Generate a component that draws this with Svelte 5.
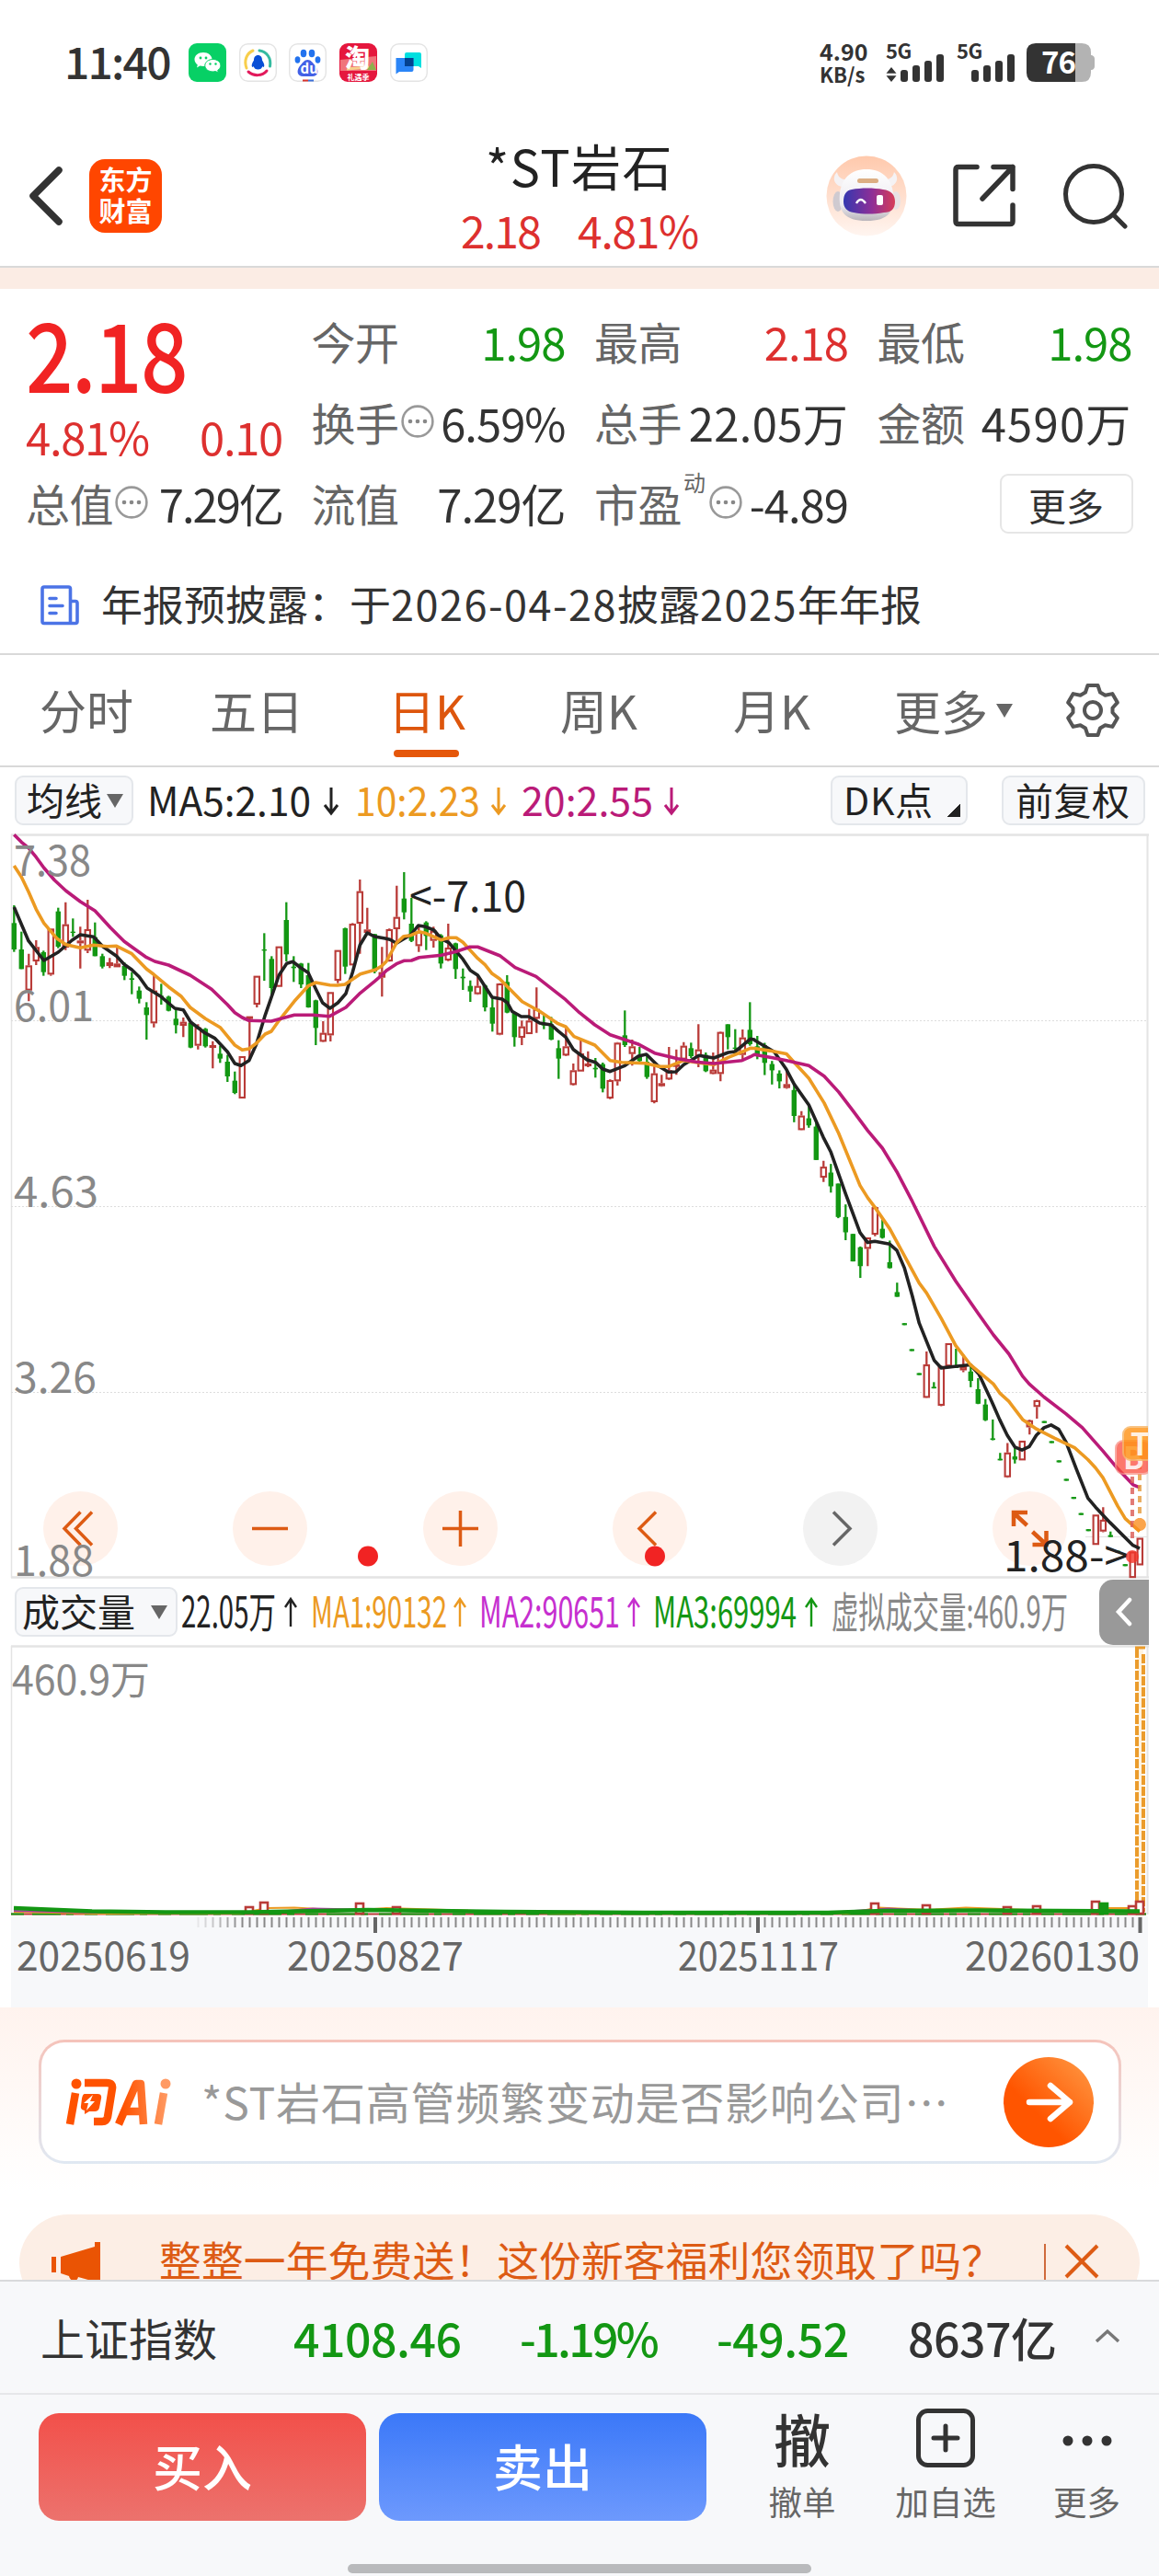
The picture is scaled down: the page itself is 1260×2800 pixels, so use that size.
<script>
  // Daily bars, grouped in blocks. Each bar is [direction, high, bodyTop, bodyBottom, low].
  const STEP = 8;
  const FIRST_X = 15.3;
  const blocks = [
    {
      base: 830,
      unit: 3,
      bars: [
        ['g', 462, 520, 606, 614], ['g', 548, 606, 670, 670], ['r', 620, 658, 740, 775], ['r', 576, 598, 645, 657],
        ['g', 610, 615, 680, 692], ['r', 538, 538, 688, 692], ['g', 470, 482, 597, 602], ['r', 452, 524, 600, 608],
        ['g', 505, 548, 552, 565], ['r', 532, 577, 586, 668], ['r', 444, 540, 610, 618], ['g', 518, 566, 628, 628],
        ['g', 620, 628, 662, 668], ['r', 634, 648, 660, 667], ['r', 596, 652, 664, 664], ['g', 648, 660, 692, 706],
        ['g', 680, 700, 705, 752], ['g', 727, 740, 767, 782], ['g', 778, 795, 820, 900], ['r', 690, 740, 847, 860],
        ['g', 718, 757, 761, 786], ['g', 757, 760, 806, 808], ['g', 800, 832, 853, 880], ['r', 828, 842, 855, 892],
        ['g', 843, 845, 926, 928], ['r', 850, 860, 920, 932], ['g', 862, 865, 922, 926], ['r', 905, 918, 926, 994],
        ['g', 920, 946, 962, 976], ['g', 950, 972, 1020, 1038], ['g', 1004, 1034, 1074, 1078], ['r', 954, 954, 1092, 1092],
        ['r', 824, 824, 829, 960], ['r', 692, 692, 786, 795], ['g', 553, 606, 610, 708], ['g', 628, 637, 732, 755],
        ['r', 596, 596, 728, 728], ['g', 452, 510, 622, 645], ['g', 628, 662, 667, 712], ['g', 650, 652, 720, 732],
        ['g', 650, 690, 795, 796], ['g', 770, 772, 862, 918], ['r', 840, 878, 907, 908], ['r', 745, 745, 886, 906],
        ['r', 608, 608, 708, 716], ['g', 535, 537, 662, 686], ['r', 520, 522, 658, 658], ['r', 378, 416, 522, 620],
        ['r', 470, 541, 552, 555], ['g', 555, 556, 678, 684], ['r', 598, 680, 698, 760]
      ]
    },
    {
      base: 900,
      unit: 3,
      bars: [
        ['r', 328, 330, 435, 436], ['r', 188, 290, 330, 375], ['g', 144, 230, 275, 298], ['g', 228, 312, 368, 372],
        ['r', 320, 338, 385, 404], ['g', 304, 308, 352, 398], ['r', 322, 335, 368, 390], ['g', 346, 350, 442, 458],
        ['r', 312, 390, 432, 434], ['g', 374, 376, 460, 492], ['g', 458, 485, 490, 528], ['g', 497, 515, 533, 567],
        ['r', 480, 515, 542, 544], ['g', 510, 514, 585, 598], ['g', 555, 585, 638, 664], ['r', 506, 507, 674, 676],
        ['g', 480, 502, 602, 604], ['g', 600, 603, 682, 713], ['r', 628, 647, 684, 708], ['r', 590, 628, 672, 672],
        ['r', 520, 590, 622, 668], ['g', 605, 638, 644, 656], ['g', 616, 640, 690, 692], ['g', 692, 718, 752, 818],
        ['r', 648, 712, 742, 744], ['r', 768, 790, 838, 840], ['r', 690, 735, 794, 794], ['r', 728, 768, 776, 780],
        ['g', 750, 782, 787, 814], ['g', 765, 770, 850, 862], ['r', 820, 822, 882, 884], ['r', 698, 700, 826, 840],
        ['g', 595, 676, 708, 714], ['r', 690, 712, 737, 775], ['g', 714, 745, 760, 762], ['g', 738, 762, 812, 818],
        ['r', 770, 800, 894, 898], ['r', 805, 832, 842, 844], ['r', 714, 790, 820, 822], ['r', 722, 770, 776, 805],
        ['r', 698, 710, 755, 760], ['g', 700, 718, 744, 750], ['r', 640, 722, 745, 780], ['g', 732, 740, 793, 796],
        ['r', 732, 788, 802, 803], ['r', 664, 665, 802, 826], ['g', 640, 640, 682, 722], ['g', 656, 716, 720, 735],
        ['r', 657, 683, 740, 760], ['g', 568, 658, 705, 710], ['g', 678, 712, 740, 754]
      ]
    },
    {
      base: 1060,
      unit: 2.34,
      bars: [
        ['g', 172, 178, 223, 254], ['g', 218, 226, 242, 278], ['g', 242, 250, 270, 288], ['r', 240, 277, 287, 289],
        ['g', 280, 292, 358, 374], ['r', 346, 357, 394, 395], ['g', 335, 364, 382, 388], ['g', 370, 385, 470, 470],
        ['r', 472, 487, 515, 526], ['g', 480, 502, 537, 553], ['g', 530, 530, 615, 618], ['g', 583, 615, 654, 674],
        ['g', 658, 658, 728, 728], ['g', 690, 692, 740, 770], ['r', 667, 667, 696, 740], ['r', 590, 590, 660, 664],
        ['g', 620, 645, 668, 670], ['g', 675, 730, 745, 746], ['g', 782, 806, 818, 818], ['g', 885, 885, 890, 890],
        ['g', 951, 951, 956, 956], ['g', 1012, 1012, 1017, 1017], ['r', 957, 990, 1075, 1076], ['g', 1035, 1047, 1051, 1051],
        ['r', 993, 995, 1095, 1096], ['r', 936, 936, 995, 995], ['g', 950, 995, 999, 999], ['r', 965, 995, 1005, 1010],
        ['g', 995, 1008, 1032, 1048], ['g', 1025, 1053, 1090, 1091], ['g', 1078, 1092, 1132, 1134], ['g', 1130, 1178, 1182, 1183],
        ['g', 1215, 1230, 1234, 1234], ['r', 1190, 1214, 1277, 1278], ['g', 1200, 1224, 1232, 1242], ['r', 1184, 1184, 1234, 1234],
        ['r', 1130, 1132, 1150, 1168], ['r', 1080, 1081, 1098, 1128], ['g', 1134, 1134, 1139, 1139], ['g', 1185, 1185, 1190, 1190],
        ['g', 1234, 1234, 1239, 1239], ['g', 1281, 1281, 1286, 1286], ['g', 1327, 1327, 1332, 1332], ['g', 1368, 1368, 1373, 1373],
        ['g', 1409, 1409, 1414, 1414], ['r', 1372, 1372, 1449, 1449], ['r', 1353, 1385, 1415, 1417], ['g', 1415, 1424, 1429, 1429],
        ['g', 1464, 1464, 1469, 1469], ['g', 1498, 1498, 1503, 1503], ['r', 1466, 1466, 1533, 1533], ['r', 1431, 1431, 1501, 1501]
      ]
    }
  ];

  const candles = blocks
    .flatMap((b) => b.bars.map(([dir, ...ys]) => [dir, ...ys.map((y) => b.base + y / b.unit)]))
    .map(([dir, high, top, bottom, low], i) => ({ dir, high, top, bottom, low, x: FIRST_X + i * STEP }));

  // Moving averages, as runs of points; every run has its own origin and unit.
  const origins = [
    [0, 830, 3],
    [420, 900, 3],
    [820, 1060, 2.34]
  ];
  const toPath = (runs) => {
    const pts = runs.flatMap((run, k) => {
      const [ox, oy, u] = origins[k];
      return run.split(' ').map((p) => {
        const [x, y] = p.split(',').map(Number);
        return [ox + x / 3, oy + y / u];
      });
    });
    return 'M' + pts.map(([x, y]) => `${x.toFixed(1)} ${y.toFixed(1)}`).join('L');
  };

  const averages = [
    {
      name: 'ma5',
      d: toPath([
        '46,468 93,578 143,642 190,615 235,576 262,558 305,565 335,596 380,628 405,655 430,672 454,695 480,732 525,760 570,798 598,803 622,843 668,878 700,895 742,940 766,978 786,985 812,968 836,915 865,820 910,690 935,652 955,646 980,665 1005,682 1030,735 1052,780 1076,798 1102,780 1128,750 1150,680 1174,592 1198,552 1222,564 1256,570',
        '12,364 33,376 80,348 104,318 128,322 155,333 180,362 204,374 250,428 274,464 298,480 345,552 378,558 395,570 410,598 440,615 465,615 500,636 538,642 560,662 585,682 610,722 655,756 682,764 706,786 730,794 778,775 822,744 848,738 885,775 920,796 945,795 970,772 1020,742 1068,750 1115,732 1138,729 1187,688 1200,690',
        '0,165 65,195 105,240 130,277 178,330 225,412 250,450 298,556 345,655 370,680 393,677 442,684 465,700 490,745 515,815 538,885 587,980 610,999 655,995 705,991 733,1015 775,1085 800,1130 825,1170 850,1200 873,1208 897,1199 920,1170 945,1151 968,1144 993,1155 1017,1188 1050,1255 1088,1330 1113,1353 1160,1392 1235,1450 1257,1458'
      ])
    },
    {
      name: 'ma10',
      d: toPath([
        '46,333 70,370 93,418 118,475 143,520 185,570 215,590 262,601 305,592 350,596 380,595 430,620 478,670 502,688 550,728 590,758 620,795 670,832 718,860 766,918 790,934 812,930 836,912 865,882 885,873 910,838 960,775 1005,725 1030,714 1076,722 1100,723 1125,720 1175,686 1225,672 1245,660',
        '0,435 33,375 57,353 80,350 107,338 128,343 178,365 204,358 228,358 250,373 298,425 322,446 345,475 370,492 443,566 500,598 560,638 585,648 612,680 680,708 730,758 768,764 845,767 890,778 920,778 970,758 1020,766 1068,772 1115,748 1160,730 1187,718',
        '0,186 50,192 105,200 128,220 178,262 228,325 275,402 345,535 370,566 393,590 442,645 538,783 562,808 610,873 657,942 705,991 780,1040 802,1064 830,1084 875,1130 920,1154 980,1178 1045,1202 1088,1232 1113,1253 1137,1278 1185,1350 1210,1382 1257,1415'
      ])
    },
    {
      name: 'ma20',
      d: toPath([
        '46,232 70,256 93,275 118,305 143,340 178,380 215,415 262,450 310,480 360,535 405,580 430,598 478,632 505,645 550,657 620,690 690,736 742,786 766,812 790,828 812,838 885,840 960,820 1020,820 1075,824 1128,795 1175,748 1222,710 1245,690',
        '0,465 33,443 57,433 82,432 107,422 180,415 228,403 272,388 298,388 370,416 420,455 488,484 585,560 630,602 680,642 730,674 820,704 875,734 950,752 1010,763 1068,768 1160,758 1187,746',
        '0,202 60,210 105,217 178,230 228,257 275,297 322,345 370,395 418,440 465,500 515,575 587,690 657,778 730,860 780,915 830,963 875,1020 897,1040 945,1073 1017,1116 1070,1151 1137,1210 1185,1255 1235,1296 1257,1303'
      ])
    }
  ];

  const axis = [
    ['7.38', 952, 84],
    ['6.01', 1110, 87],
    ['4.63', 1312, 92],
    ['3.26', 1514, 90],
    ['1.88', 1713, 87]
  ];

  // Volume bars that rise above the baseline: [x, top, direction]
  const peaks = [
    [271, 2073, 'r'], [287, 2068, 'r'], [391, 2069, 'r'], [431, 2073, 'r'], [951, 2069, 'r'], [1007, 2071, 'r'],
    [1095, 2073, 'r'], [1127, 2072, 'r'], [1191, 2067, 'r'], [1200, 2069, 'g'], [1231, 2072, 'r'], [1239, 2067, 'r']
  ];
  const ticks = Array.from({ length: 129 }, (_, i) => 215.5 + i * 8);
  const dates = [
    ['20250619', 18, 189],
    ['20250827', 312, 192],
    ['20251117', 737, 175],
    ['20260130', 1049, 190]
  ];
</script>

{#snippet more()}
  <svg class="dots" viewBox="0 0 36 36">
    <circle cx="18" cy="18" r="16.4" fill="none" stroke="#999" stroke-width="2.6" />
    <g fill="#888"><circle cx="10" cy="18" r="2.3" /><circle cx="18" cy="18" r="2.3" /><circle cx="26" cy="18" r="2.3" /></g>
  </svg>
{/snippet}

{#snippet signal()}
  <svg class="bars" viewBox="0 0 48 30" fill="#333">
    <rect x="0" y="17" width="8" height="13" rx="3" /><rect x="13" y="12" width="8" height="18" rx="3" />
    <rect x="26" y="7" width="8" height="23" rx="3" /><rect x="39" y="0" width="8" height="30" rx="3" />
  </svg>
{/snippet}

<div class="screen">
  <div class="status">
    <span class="clock">11:40</span>
    <div class="apps">
      <svg viewBox="0 0 41 42">
        <rect width="41" height="42" rx="9" fill="#07d065" />
        <g fill="#fff">
          <path d="M16 10c-5.600 0-9.500 3.400-9.500 7.600 0 2.500 1.300 4.400 3.300 5.800l-.8 3 3.400-1.800c1.100.3 2.300.5 3.600.5 5.600 0 9.500-3.400 9.500-7.500S21.600 10 16 10z" />
          <path d="M26.500 17.500c-5 0-8.700 3-8.700 6.700s3.700 6.700 8.700 6.700c1 0 2-.1 2.900-.4l3 1.600-.7-2.700c2-1.200 3.200-3 3.200-5.200 0-3.700-3.500-6.700-8.400-6.700z" stroke="#07d065" />
        </g>
        <g fill="#07d065"><circle cx="13" cy="16" r="1.400" /><circle cx="19" cy="16" r="1.400" /><circle cx="23.500" cy="22.500" r="1.200" /><circle cx="29.500" cy="22.500" r="1.200" /></g>
      </svg>
      <svg viewBox="0 0 41 42">
        <rect x=".7" y=".7" width="39.600" height="40.600" rx="9" fill="#fff" stroke="#e4e4e4" stroke-width="1.400" />
        <g fill="none" stroke-width="3" stroke-linecap="round">
          <path d="M8 27c-3-8 0-16 7-19" stroke="#f8ce4b" /><path d="M22 8c8 1 13 8 11.500 17" stroke="#35bba0" /><path d="M10 31c6 5 15 5 20-1" stroke="#e2195b" />
        </g>
        <path d="M20.500 13c-3 0-4.500 2.300-4.500 5.500-2 3-3 6-1.800 7.500l1.500-.8c.6 2 2.300 3.300 4.800 3.300s4.200-1.300 4.800-3.300l1.500.8c1.200-1.500.2-4.500-1.800-7.500 0-3.200-1.500-5.500-4.500-5.500z" fill="#0a4fd6" />
      </svg>
      <svg viewBox="0 0 41 42">
        <rect x=".7" y=".7" width="39.600" height="40.600" rx="9" fill="#fff" stroke="#e4e4e4" stroke-width="1.400" />
        <g fill="#2272ee"><ellipse cx="16" cy="11" rx="3.300" ry="4.200" /><ellipse cx="25" cy="11" rx="3.300" ry="4.200" /><ellipse cx="9.500" cy="18" rx="2.900" ry="3.700" /><ellipse cx="31.500" cy="18" rx="2.900" ry="3.700" /></g>
        <path d="M20.500 18c-3.500 0-5.200 3-8 6-4.500 5-4 12 3 12h10c7 0 7.500-7 3-12-2.800-3-4.500-6-8-6z" fill="#4360e6" />
        <text x="12.500" y="33" class="du">du</text>
        <rect x="15" y="39.500" width="6" height="2" fill="#d8332c" /><rect x="21" y="39.500" width="6" height="2" fill="#3a6fd8" />
      </svg>
      <svg viewBox="0 0 41 42">
        <rect width="41" height="42" rx="9" fill="#e5173d" />
        <path d="M1 18l39-4v17H1z" fill="#f0747b" /><path d="M8 28l24-2" stroke="#f6d08b" stroke-width="3" /><path d="M30 29l6-9 4 9z" fill="#8fb04c" />
        <rect y="30" width="41" height="4" fill="#e5173d" />
        <text x="6" y="26" class="tao">淘</text><text x="8.500" y="39.500" class="gift">礼遇季</text>
      </svg>
      <svg viewBox="0 0 41 42">
        <rect x=".7" y=".7" width="39.600" height="40.600" rx="9" fill="#fff" stroke="#e4e4e4" stroke-width="1.400" />
        <path d="M18 10h14q2 0 2 2v15l-3-2H16V12q0-2 2-2z" fill="#00dfe0" /><path d="M6.500 16h19v13q0 2-2 2H10l-3.500 2.500z" fill="#2b85f7" /><path d="M16 16h9.500v9H16z" fill="#04418f" />
      </svg>
    </div>
    <div class="net"><span>4.90</span><span class="kb">KB/s</span></div>
    <div class="cell">
      <span>5G</span>
      <div><svg class="updown" viewBox="0 0 12 16"><path d="M6 0l5.500 6.800H.5zM6 16l5.500-6.800H.5z" fill="#333" /></svg>{@render signal()}</div>
    </div>
    <div class="cell second"><span>5G</span><div>{@render signal()}</div></div>
    <div class="battery">
      <svg viewBox="0 0 75 42">
        <path d="M53 0h7q10 0 10 10v3h1q3 1 3 4v8q0 3-3 4h-1v3q0 10-10 10h-7z" fill="#b3b3b3" />
        <path d="M10 0h43v42H10Q0 42 0 32V10Q0 0 10 0z" fill="#333" />
      </svg>
      <span>76</span>
    </div>
  </div>

  <header class="header">
    <svg class="back" viewBox="0 0 38 64"><path d="M33 4L5 32l28 28" fill="none" stroke="#333" stroke-width="7.500" stroke-linecap="round" stroke-linejoin="round" /></svg>
    <div class="brand"><span>东方</span><span>财富</span></div>
    <div class="title">
      <div class="name">*ST岩石</div>
      <div class="sub"><span class="sub-price">2.18</span><span class="sub-pct">4.81%</span></div>
    </div>
    <svg class="robot" viewBox="0 0 88 88">
      <defs>
        <linearGradient id="peach" x2="0" y2="1"><stop stop-color="#ffc9ac" /><stop offset="1" stop-color="#fff5f0" /></linearGradient>
        <linearGradient id="visor"><stop stop-color="#3437b0" /><stop offset=".55" stop-color="#8e2f97" /><stop offset="1" stop-color="#d63d58" /></linearGradient>
        <linearGradient id="shell" x2="0" y2="1"><stop stop-color="#fff" /><stop offset=".7" stop-color="#eceaf0" /><stop offset="1" stop-color="#b9b4ba" /></linearGradient>
      </defs>
      <circle cx="44" cy="44" r="43.500" fill="url(#peach)" />
      <path d="M12 18c-6 6-3 15 6 16l6-8c-6 1-11-2-12-8zM74 18c6 6 3 15-6 16l-6-8c6 1 11-2 12-8z" fill="#f5f2f4" />
      <ellipse cx="13" cy="50" rx="5.500" ry="11" fill="#cfcad0" /><ellipse cx="76" cy="49" rx="5" ry="10" fill="#e8e2e4" />
      <path d="M44 15c17 0 27 10 29 26 2 20-5 30-29 30S13 61 15 41c2-16 12-26 29-26z" fill="url(#shell)" />
      <rect x="34" y="25" width="23" height="5" rx="2.500" fill="#dcae83" />
      <path d="M28 37c10-2 24-2 34 0 9 1 13 6 13 13 0 8-4 12-12 12-12 2-22 2-33 0-7-1-11-5-11-12 0-8 3-12 9-13z" fill="url(#visor)" />
      <path d="M33 52q4.500-8 10 0" fill="none" stroke="#fff" stroke-width="2.400" /><rect x="55" y="43" width="7" height="11" rx="2" fill="#fff" />
    </svg>
    <svg class="share" viewBox="0 0 70 70" fill="none" stroke="#333" stroke-width="5.500" stroke-linecap="round" stroke-linejoin="round">
      <path d="M27 3.500H7Q4 3.500 4 6.500v56q0 3 3 3h56q3 0 3-3V45" /><path d="M45 3.500h21v24M66 3.500L33 38" />
    </svg>
    <svg class="search" viewBox="0 0 72 72" fill="none" stroke="#333" stroke-width="5" stroke-linecap="round"><circle cx="34" cy="34" r="30.500" /><path d="M56 57l12 12" /></svg>
  </header>
  <div class="strip"></div>

  <section class="quote">
    <div class="lead">
      <div class="last"><span>2.18</span></div>
      <div class="change"><span>4.81%</span><span>0.10</span></div>
      <div class="item tight"><label>总值</label>{@render more()}<b>7.29亿</b></div>
    </div>
    <div class="item"><label>今开</label><b class="down">1.98</b></div>
    <div class="item"><label>最高</label><b class="up">2.18</b></div>
    <div class="item"><label>最低</label><b class="down">1.98</b></div>
    <div class="item"><label>换手</label>{@render more()}<b>6.59%</b></div>
    <div class="item loose"><label>总手</label><b>22.05万</b></div>
    <div class="item looser"><label>金额</label><b>4590万</b></div>
    <div class="item"><label>流值</label><b>7.29亿</b></div>
    <div class="item"><label>市盈</label><sup>动</sup>{@render more()}<b>-4.89</b></div>
    <div class="item"><button class="more">更多</button></div>
  </section>

  <div class="news">
    <svg viewBox="0 0 42 44" fill="none" stroke="#4b73e6" stroke-width="3.600" stroke-linejoin="round" stroke-linecap="round">
      <path d="M32.500 41.500H4q-2 0-2-2V4q0-2 2-2h26.500q2 0 2 2zM32.500 17.500H38q2 0 2 2v20q0 2-2 2h-5.500M10 14.500h7M10 22.500h14M10 30.500h7" />
    </svg>
    <p>年报预披露：于<span>2026-04-28</span>披露<span>2025</span>年年报</p>
  </div>

  <nav class="tabs">
    <span class="tab t1">分时</span><span class="tab t2">五日</span><span class="tab t3 active">日K</span><span class="tab t4">周K</span><span class="tab t5">月K</span><span class="tab t6">更多<i></i></span>
    <svg class="gear" viewBox="0 0 60 60" fill="none" stroke="#555" stroke-width="4" stroke-linejoin="round">
      <path d="M24.500 3h11l2.500 7.500 5.500 3.200 7.800-1.600 5.500 9.500-5.300 5.900v5l5.300 5.900-5.500 9.500-7.800-1.600-5.500 3.200-2.500 7.500h-11L22 49.500l-5.500-3.200-7.800 1.600-5.500-9.500 5.300-5.900v-5l-5.300-5.900 5.500-9.500 7.800 1.600 5.500-3.200z" /><circle cx="30" cy="30" r="9" />
    </svg>
  </nav>

  <div class="indicators">
    <button class="pick">均线<i></i></button>
    <svg class="legend" viewBox="152 834 744 72">
      <g class="t43">
        <text x="160" y="887" textLength="178" lengthAdjust="spacingAndGlyphs" fill="#222">MA5:2.10</text>
        <text x="386" y="887" textLength="136" lengthAdjust="spacingAndGlyphs" fill="#ec9a22">10:2.23</text>
        <text x="567" y="887" textLength="143" lengthAdjust="spacingAndGlyphs" fill="#ba1b78">20:2.55</text>
      </g>
      <g fill="none" stroke-width="3"><path d="M360 856v28m-7-9l7 9 7-9" stroke="#222" /><path d="M542 856v28m-7-9l7 9 7-9" stroke="#ec9a22" /><path d="M730 856v28m-7-9l7 9 7-9" stroke="#ba1b78" /></g>
    </svg>
    <button class="pick dk">DK点</button>
    <button class="pick fq">前复权</button>
  </div>

  <svg class="chart" viewBox="0 906 1260 810">
    <g fill="none" stroke="#e4e4e4" stroke-width="2"><path d="M12 907.500H1249M12 1714.500H1249" stroke-width="2.500" /><path d="M12.500 907v808" stroke-width="1.500" /><path d="M1247.500 907v808" /></g>
    <path d="M12 1109.500H1248M12 1311.500H1248M12 1513.500H1248" stroke="#ddd" stroke-width="1.200" stroke-dasharray="2 2" />
    <path d="M1180 1670.500h68" stroke="#e2e2e2" />
    {#each candles as c}
      {#if c.dir === 'g'}
        <path d="M{c.x} {c.high}V{c.low}" stroke="#139713" stroke-width="2.300" /><rect x={c.x - 2.700} y={c.top} width="5.400" height={c.bottom - c.top} fill="#139713" />
      {:else}
        <path d="M{c.x} {c.high}V{c.top}M{c.x} {c.bottom}V{c.low}" stroke="#b93b38" stroke-width="2.300" />
        <rect x={c.x - 2.700} y={c.top + 1} width="5.400" height={Math.max(c.bottom - c.top - 2, 1)} fill="#fff" stroke="#b93b38" stroke-width="2.100" />
      {/if}
    {/each}
    {#each averages as a}<path class={a.name} d={a.d} />{/each}

    <g class="controls">
      {#each [87.5, 293.5, 500.5, 706.5, 913.5, 1119.5] as cx, i}<circle {cx} cy="1661.500" r="40.500" fill={i === 4 ? '#f2f2f2' : '#fff1ea'} opacity={i === 5 ? 0.92 : 1} />{/each}
      <path d="M87.500 1643.500L70 1661.500l17.500 18M100 1643.500l-17.500 18 17.500 18M274 1661.500h39M481 1661.500h39M500.500 1642v39M713 1643.500l-18 18 18 18" />
      <path d="M906 1643.500l18 18-18 18" class="next" />
      <path d="M1117 1644h-15v15M1102 1644.500l14.500 13.500M1137.500 1664v15h-15M1137 1678.500l-14.500-13.500" class="expand" />
    </g>
    <circle cx="400" cy="1691.500" r="11" fill="#f12323" /><circle cx="712" cy="1691.500" r="11" fill="#f12323" />

    <g class="t46" fill="#888">{#each axis as [label, y, w]}<text x="15" {y} textLength={w} lengthAdjust="spacingAndGlyphs">{label}</text>{/each}</g>
    <g class="t46" fill="#222">
      <text x="445" y="991" textLength="127" lengthAdjust="spacingAndGlyphs">&lt;-7.10</text>
      <text x="1091" y="1708" textLength="136" lengthAdjust="spacingAndGlyphs">1.88-&gt;</text>
    </g>
    <g opacity=".8">
      <path d="M1231 1605v68" stroke="#dc5b54" stroke-width="4" stroke-dasharray="7 5" /><path d="M1239 1590v68" stroke="#e49b3c" stroke-width="4" stroke-dasharray="7 5" />
      <circle cx="1239" cy="1657" r="7" fill="#fb8f20" /><circle cx="1231" cy="1692" r="7" fill="#f43528" />
    </g>
    <svg x="1208" y="1540" width="40" height="70" viewBox="1208 1540 40 70">
      <rect x="1213" y="1566" width="38" height="36" rx="8" fill="#fb4b3b" opacity=".75" stroke="#f98f84" stroke-width="2" />
      <text x="1221" y="1597" class="mark">B</text>
      <rect x="1221" y="1551" width="38" height="36" rx="8" fill="#ff9417" opacity=".82" stroke="#f7b768" stroke-width="2" />
      <text x="1229" y="1582" class="mark">T</text>
    </svg>
  </svg>

  <div class="volume-bar">
    <button class="pick vol">成交量<i></i></button>
    <svg class="legend" viewBox="196 1717 998 72">
      <g class="t45">
        <text x="197" y="1770" textLength="103" lengthAdjust="spacingAndGlyphs" fill="#222">22.05万</text>
        <text x="338" y="1770" textLength="148" lengthAdjust="spacingAndGlyphs" fill="#ec9a22">MA1:90132</text>
        <text x="521" y="1770" textLength="153" lengthAdjust="spacingAndGlyphs" fill="#c62fcf">MA2:90651</text>
        <text x="710" y="1770" textLength="156" lengthAdjust="spacingAndGlyphs" fill="#139713">MA3:69994</text>
        <text x="904" y="1770" textLength="257" lengthAdjust="spacingAndGlyphs" fill="#888">虚拟成交量:460.9万</text>
      </g>
      <g fill="none" stroke-width="2.400">
        <path d="M316 1769v-30m-6 9l6-9 6 9" stroke="#222" /><path d="M500 1769v-30m-6 9l6-9 6 9" stroke="#ec9a22" /><path d="M689 1769v-30m-6 9l6-9 6 9" stroke="#c62fcf" /><path d="M882 1769v-30m-6 9l6-9 6 9" stroke="#139713" />
      </g>
    </svg>
    <div class="drawer"><svg viewBox="0 0 20 32"><path d="M16 3L4 16l12 13" fill="none" stroke="#fff" stroke-width="4.500" stroke-linecap="round" /></svg></div>
  </div>

  <svg class="volume" viewBox="0 1788 1260 394">
    <rect x="12" y="2083" width="1236" height="99" fill="#f7f8fa" />
    <path d="M12 1789.500H1249" stroke="#e4e4e4" stroke-width="2.500" /><path d="M12.500 1789v292" stroke="#e4e4e4" stroke-width="1.500" /><path d="M1247.500 1789v292" stroke="#e4e4e4" stroke-width="2" />
    <text class="t44" x="13" y="1842" textLength="150" lengthAdjust="spacingAndGlyphs" fill="#888">460.9万</text>
    <path d="M12 2080.500H1246" stroke="#b93b38" stroke-width="2" /><path d="M12 2080.500H1246" stroke="#139713" stroke-width="2" stroke-dasharray="14 9 31 6 8 12" />
    <g fill="none" stroke-width="2">
      <path d="M15 2078L100 2080H260L290 2074 320 2073.500 380 2077 420 2074 620 2080H920L955 2073.500 1010 2076 1050 2073.500 1170 2078 1200 2074H1239" stroke="#ec9a22" />
      <path d="M15 2077L100 2079H290L340 2074.500 460 2077 900 2079 965 2074.500 1020 2077H1239" stroke="#a83f9f" />
    </g>
    <rect x="1236" y="1792" width="7" height="286" fill="#fff3df" />
    <path d="M1236 1792v286M1243 1798v280" stroke="#eb9c2c" stroke-width="4" stroke-dasharray="10 2" /><path d="M1234 1791h11" stroke="#eb9c2c" stroke-width="3" />
    {#each peaks as [x, top, dir]}<rect x={x - 4} y={top} width="8" height={2080 - top} fill={dir === 'g' ? '#139713' : '#fff'} stroke={dir === 'g' ? '#139713' : '#b93b38'} stroke-width="2.600" />{/each}
    <path d="M15 2074L100 2077.500 180 2078.500H270L350 2077 400 2076 550 2078 700 2079H900L960 2077 1060 2076.500 1239 2077.500" fill="none" stroke="#139713" stroke-width="4.500" />
    {#each ticks as x, i}<path d="M{x} 2084v11" stroke="#888" stroke-width="2" opacity={Math.min((i + 1) / 7, 1)} />{/each}
    <path d="M408 2084v17M824 2084v17M1239.500 2084v17" stroke="#666" stroke-width="4" />
    <g class="t43" fill="#666">{#each dates as [d, x, w]}<text {x} y="2142" textLength={w} lengthAdjust="spacingAndGlyphs">{d}</text>{/each}</g>
  </svg>

  <section class="ai">
    <div class="ask">
      <svg class="ask-logo" viewBox="0 0 116 52">
        <defs><linearGradient id="flame" gradientUnits="userSpaceOnUse" x1="0" x2="116" y1="0" y2="0"><stop offset=".55" stop-color="#ff5200" /><stop offset="1" stop-color="#ffa06b" /></linearGradient></defs>
        <g fill="none" stroke="url(#flame)" stroke-width="8.500" stroke-linejoin="round" stroke-linecap="butt">
          <path d="M12 16L6 50M22 5h24q7 0 6 6l-5 31q-1 5-6 5h-9" /><path d="M59 50L78 6h5l3 44M66 36h20" /><path d="M108 16l-6 34" />
        </g>
        <circle cx="13" cy="6" r="5.500" fill="#ff5200" /><circle cx="110" cy="6" r="5.500" fill="#ff9a63" />
        <path d="M22 17h14q5 0 4 5l-2 10q-1 4-5 4h-6l-5 3v-4q-5-1-4-5l1-8q1-5 3-5z" fill="#ff5200" /><path d="M31 18l-10 9h5l-2 8 9-10h-5z" fill="#fff" />
      </svg>
      <span>*ST岩石高管频繁变动是否影响公司⋯</span>
      <svg class="go" viewBox="0 0 98 98">
        <defs><linearGradient id="ember" x1=".25" y1=".75" x2=".85" y2=".15"><stop offset=".2" stop-color="#ff5500" /><stop offset="1" stop-color="#ff8b36" /></linearGradient></defs>
        <circle cx="49" cy="49" r="49" fill="url(#ember)" /><path d="M28 49h44M51 31l21 18-21 18" fill="none" stroke="#fff" stroke-width="6.500" stroke-linecap="round" stroke-linejoin="round" />
      </svg>
    </div>
    <div class="promo">
      <svg class="horn" viewBox="0 0 54 54" fill="#ea5404"><path d="M0 16h5v17H0zM10 16l37-11V0h6v54h-6V43l-18-5c-1 6-9 5-10-1l-9-3z" /></svg>
      <span>整整一年免费送！这份新客福利您领取了吗？</span>
      <i></i>
      <svg class="close" viewBox="0 0 38 38"><path d="M2 2l34 34M36 2L2 36" stroke="#dd5b14" stroke-width="4" /></svg>
    </div>
  </section>

  <footer class="footer">
    <div class="index">
      <span class="i1">上证指数</span><b class="i2 down">4108.46</b><b class="i3 down">-1.19%</b><b class="i4 down">-49.52</b><b class="i5">8637亿</b>
      <svg viewBox="0 0 28 16"><path d="M2 14L14 3l12 11" fill="none" stroke="#777" stroke-width="3.400" /></svg>
    </div>
    <div class="actions">
      <button class="trade buy">买入</button><button class="trade sell">卖出</button>
      <div class="act a1"><strong>撤</strong><span>撤单</span></div>
      <div class="act a2"><svg viewBox="0 0 64 64" fill="none" stroke="#333" stroke-width="5"><rect x="2.500" y="2.500" width="59" height="59" rx="10" /><path d="M32 19v26M19 32h26" stroke-linecap="round" /></svg><span>加自选</span></div>
      <div class="act a3"><svg viewBox="0 0 64 64" fill="#333"><circle cx="11" cy="35" r="5.500" /><circle cx="32" cy="35" r="5.500" /><circle cx="53" cy="35" r="5.500" /></svg><span>更多</span></div>
    </div>
    <div class="home"></div>
  </footer>
</div>

<style>
  :global(body) { background: #fff; }
  .screen {
    width: 1260px; height: 2800px; overflow: hidden; display: flex; flex-direction: column;
    font-family: 'Noto Sans CJK SC', sans-serif; color: #333; background: #fff; line-height: 1; white-space: nowrap;
  }
  .screen > * { flex: none; }
  svg { display: block; flex: none; }
  button { font: inherit; color: inherit; padding: 0; margin: 0; border: 0; line-height: 1; flex: none; }
  svg text { font-family: 'Noto Sans CJK SC', sans-serif; }

  .status { height: 136px; display: flex; align-items: center; padding-left: 70px; box-sizing: border-box; }
  .clock { width: 135px; font-size: 48px; font-weight: 500; letter-spacing: -1.800px; margin-top: -7px; }
  .apps { display: flex; gap: 13.700px; width: 686px; }
  .apps svg { width: 41px; height: 42px; }
  .du { font-size: 15px; font-weight: 700; fill: #fff; }
  .tao { font-size: 27px; font-weight: 900; fill: #fff; }
  .gift { font-size: 8px; font-weight: 700; fill: #fff; }
  .net { width: 72px; display: flex; flex-direction: column; font-size: 25px; font-weight: 700; margin-top: -2px; }
  .net .kb { font-size: 22px; margin-top: 1px; }
  .cell { width: 77px; height: 42px; display: flex; flex-direction: column; font-size: 22px; font-weight: 700; letter-spacing: -.5px; }
  .cell span { height: 12px; line-height: 14px; }
  .cell > div { display: flex; align-items: flex-end; gap: 4px; }
  .cell.second > div { padding-left: 16px; }
  .cell.second { width: 76px; }
  .bars { width: 48px; height: 30px; }
  .updown { width: 12px; height: 16px; }
  .battery { display: grid; width: 75px; height: 42px; align-items: center; }
  .battery > * { grid-area: 1 / 1; }
  .battery span { font-size: 33px; font-weight: 700; color: #fff; padding-left: 16px; margin-top: -4px; letter-spacing: -1px; }

  .header { height: 155px; box-sizing: border-box; border-bottom: 2px solid #d9d9d9; display: flex; align-items: center; padding-left: 31px; }
  .back { width: 38px; height: 64px; margin-right: 28px; }
  .brand { width: 79px; height: 80px; border-radius: 17px; background: #ff4600; color: #fff; display: flex; flex-direction: column; align-items: center; justify-content: center; gap: 5px; font-size: 29px; font-weight: 700; }
  .brand span { height: 29px; line-height: 26px; }
  .title { width: 722px; height: 140px; display: flex; flex-direction: column; align-items: center; box-sizing: border-box; padding-left: 186px; }
  .name { font-size: 54px; line-height: 64px; margin-top: 5px; color: #222; letter-spacing: 1.500px; }
  .sub { display: flex; gap: 41px; font-size: 48px; line-height: 64px; color: #dd302f; margin-top: 5px; }
  .sub-price { letter-spacing: -1.800px; }
  .sub-pct { letter-spacing: -1.300px; }
  .robot { width: 88px; height: 88px; margin-right: 49px; }
  .share { width: 70px; height: 70px; margin-right: 50px; }
  .search { width: 72px; height: 72px; }
  .strip { height: 23px; background: #fbece4; }

  .quote { height: 282px; box-sizing: border-box; padding: 12px 0 0 28px; display: grid; grid-template-columns: 279px 276px 276px 277px; grid-template-rows: 88px 88px 88px; column-gap: 31.500px; }
  .lead { grid-row: 1 / 4; }
  .last { height: 112px; line-height: 112px; font-size: 104px; font-weight: 500; letter-spacing: -2px; color: #f12323; }
  .last span { display: inline-block; transform: scaleX(.87); transform-origin: 0 0; }
  .change { height: 64px; box-sizing: border-box; padding-top: 6px; display: flex; justify-content: space-between; align-items: center; font-size: 49px; color: #dd302f; letter-spacing: -1.300px; }
  .item { height: 88px; display: flex; align-items: center; font-size: 48px; }
  .item label { color: #666; letter-spacing: -.5px; }
  .item b { font-weight: 400; margin-left: auto; font-size: 49px; letter-spacing: -1px; }
  .tight b { letter-spacing: -2px; }
  .loose b { letter-spacing: .3px; }
  .looser b { letter-spacing: 1.200px; }
  .item sup { font-size: 24px; color: #666; align-self: flex-start; line-height: 24px; margin: 10px 2px 0 2px; }
  .dots { width: 36px; height: 36px; margin-left: 2px; }
  .up { color: #dd302f; }
  .down { color: #139713; }
  .more { margin-left: 133px; width: 145px; height: 65px; border: 2px solid #e6e6e6; border-radius: 9px; background: #fff; font-size: 41px; line-height: 56px; color: #333; margin-top: 3px; }

  .news { height: 116px; box-sizing: border-box; border-bottom: 2px solid #d9d9d9; display: flex; align-items: center; padding: 8px 0 0 44px; font-size: 45px; }
  .news svg { width: 42px; height: 44px; margin-right: 24px; margin-top: 2px; }
  .news p { margin: -4px 0 0; }
  .news span { letter-spacing: 1.500px; }

  .tabs { height: 122px; box-sizing: border-box; border-bottom: 2px solid #d9d9d9; display: flex; align-items: center; padding-left: 43px; font-size: 51px; color: #666; }
  .tab { height: 100%; line-height: 119px; position: relative; }
  .t1 { width: 185px; } .t2 { width: 194px; } .t3 { width: 187px; } .t4 { width: 188px; } .t5 { width: 175px; } .t6 { width: 186px; }
  .t6 { display: flex; align-items: center; }
  .active { color: #dd560d; }
  .active::after { content: ''; position: absolute; left: 6px; bottom: 9px; width: 71px; height: 8px; border-radius: 4px; background: #e5570a; }
  .t6 i, .pick i { border: solid transparent; border-width: 15px 9px 0; border-top-color: #666; margin-left: 6px; }
  .t6 i { margin-left: 9px; }
  .gear { width: 60px; height: 60px; }

  .indicators { height: 72px; display: flex; align-items: center; padding-left: 16px; }
  .pick { height: 54px; width: 129px; box-sizing: border-box; border: 2px solid #e4e7eb; border-radius: 9px; background: #f7f8fa; display: flex; align-items: center; padding-left: 11px; font-size: 41px; line-height: 46px; color: #222; padding-bottom: 5px; }
  .pick i { margin: 6px 0 0 5px; }
  .indicators .legend { width: 744px; height: 72px; margin-left: 7px; }
  .indicators .dk { width: 149px; margin-left: 7px; background: linear-gradient(135deg, transparent 50%, #222 50%) right 6px bottom 7px / 14px 14px no-repeat, #f7f8fa; padding-left: 12px; letter-spacing: .7px; }
  .indicators .fq { width: 156px; margin-left: 37px; padding-left: 13px; letter-spacing: .5px; }
  .t43 { font-size: 43px; } .t44 { font-size: 43px; } .t45 { font-size: 46px; } .t46 { font-size: 46px; }
  .mark { font-size: 33px; font-weight: 700; fill: #fff; opacity: .85; }

  .chart { width: 1260px; height: 810px; }
  .ma5, .ma10, .ma20 { fill: none; stroke-width: 3.600; stroke-linejoin: round; }
  .ma5 { stroke: #222; } .ma10 { stroke: #ec9a22; } .ma20 { stroke: #ba1b78; }
  .controls path { fill: none; stroke: #dd5b14; stroke-width: 3.500; }
  .controls .next { stroke: #666; }
  .controls .expand { stroke-width: 4.500; }

  .volume-bar { height: 72px; display: flex; align-items: center; padding-left: 16px; }
  .vol { width: 177px; padding-left: 6px; }
  .vol i { margin-left: 17px; }
  .volume-bar .legend { width: 998px; height: 72px; margin-left: 3px; }
  .drawer { width: 54px; height: 71px; border-radius: 15px 0 0 15px; background: #999; display: flex; align-items: center; justify-content: center; margin-left: 1px; }
  .drawer svg { width: 20px; height: 32px; }
  .volume { width: 1260px; height: 394px; }

  .ai { height: 296px; overflow: hidden; background: linear-gradient(#fff3ee, #fff 200px); box-sizing: border-box; padding-top: 35px; display: flex; flex-direction: column; }
  .ask { flex: none; margin-left: 42px; width: 1177px; height: 135px; box-sizing: border-box; border: 3px solid transparent; border-radius: 28px; background: linear-gradient(#fff, #fff) padding-box, linear-gradient(#f5c3ba, #e0e8f2) border-box; display: flex; align-items: center; padding-left: 25px; }
  .ask-logo { width: 116px; height: 52px; margin-right: 33px; }
  .ask span { width: 826px; font-size: 48px; letter-spacing: .8px; color: #999; margin-top: -4px; }
  .go { width: 98px; height: 98px; margin-left: 46px; }
  .promo { flex: none; margin: 55px 0 0 21px; width: 1218px; height: 106px; border-radius: 53px; background: #fceee5; display: flex; align-items: center; color: #dd5b14; font-size: 45.800px; }
  .horn { width: 54px; height: 54px; margin: 8px 63px 0 35px; }
  .promo span { width: 962px; margin-top: -8px; letter-spacing: .1px; }
  .promo i { width: 2px; height: 43px; background: #cf6a3c; }
  .close { width: 38px; height: 38px; margin-left: 20px; margin-top: -4px; }

  .footer { height: 322px; box-sizing: border-box; border-top: 2px solid #d9dadc; background: #f7f8fa; }
  .index { height: 123px; box-sizing: border-box; border-bottom: 2px solid #e6e7ea; display: flex; align-items: center; font-size: 50px; padding-left: 44px; line-height: 110px; }
  .index > * { padding-bottom: 2px; }
  .index b { font-weight: 500; letter-spacing: -.5px; }
  .index .i1 { font-size: 48px; width: 275px; } .i2 { width: 246px; } .i3 { width: 214px; } .i4 { width: 208px; } .i5 { width: 203px; }
  .index .i3 { letter-spacing: -2.700px; }
  .index svg { width: 28px; height: 16px; padding-bottom: 0; margin-top: -4px; }
  .actions { display: flex; padding: 20px 0 0 42px; height: 120px; }
  .trade { width: 356px; height: 117px; border-radius: 22px; color: #fff; font-size: 54px; font-weight: 500; line-height: 105px; padding-bottom: 4px; }
  .buy { background: linear-gradient(#f2504a, #ec726d); margin-right: 14px; }
  .sell { background: linear-gradient(#3b78f8, #6d99fd); }
  .act { flex: none; display: flex; flex-direction: column; align-items: center; font-size: 36.500px; color: #666; margin-top: -5px; }
  .act svg { width: 64px; height: 64px; }
  .act strong { font-size: 62px; line-height: 64px; font-weight: 500; color: #333; height: 64px; }
  .act span { margin-top: 19px; }
  .a1 { width: 208px; } .a2 { width: 104px; } .a3 { width: 203px; }
  .home { width: 504px; height: 10px; border-radius: 5px; background: #b9babc; margin: 44px 0 0 378px; }
</style>
